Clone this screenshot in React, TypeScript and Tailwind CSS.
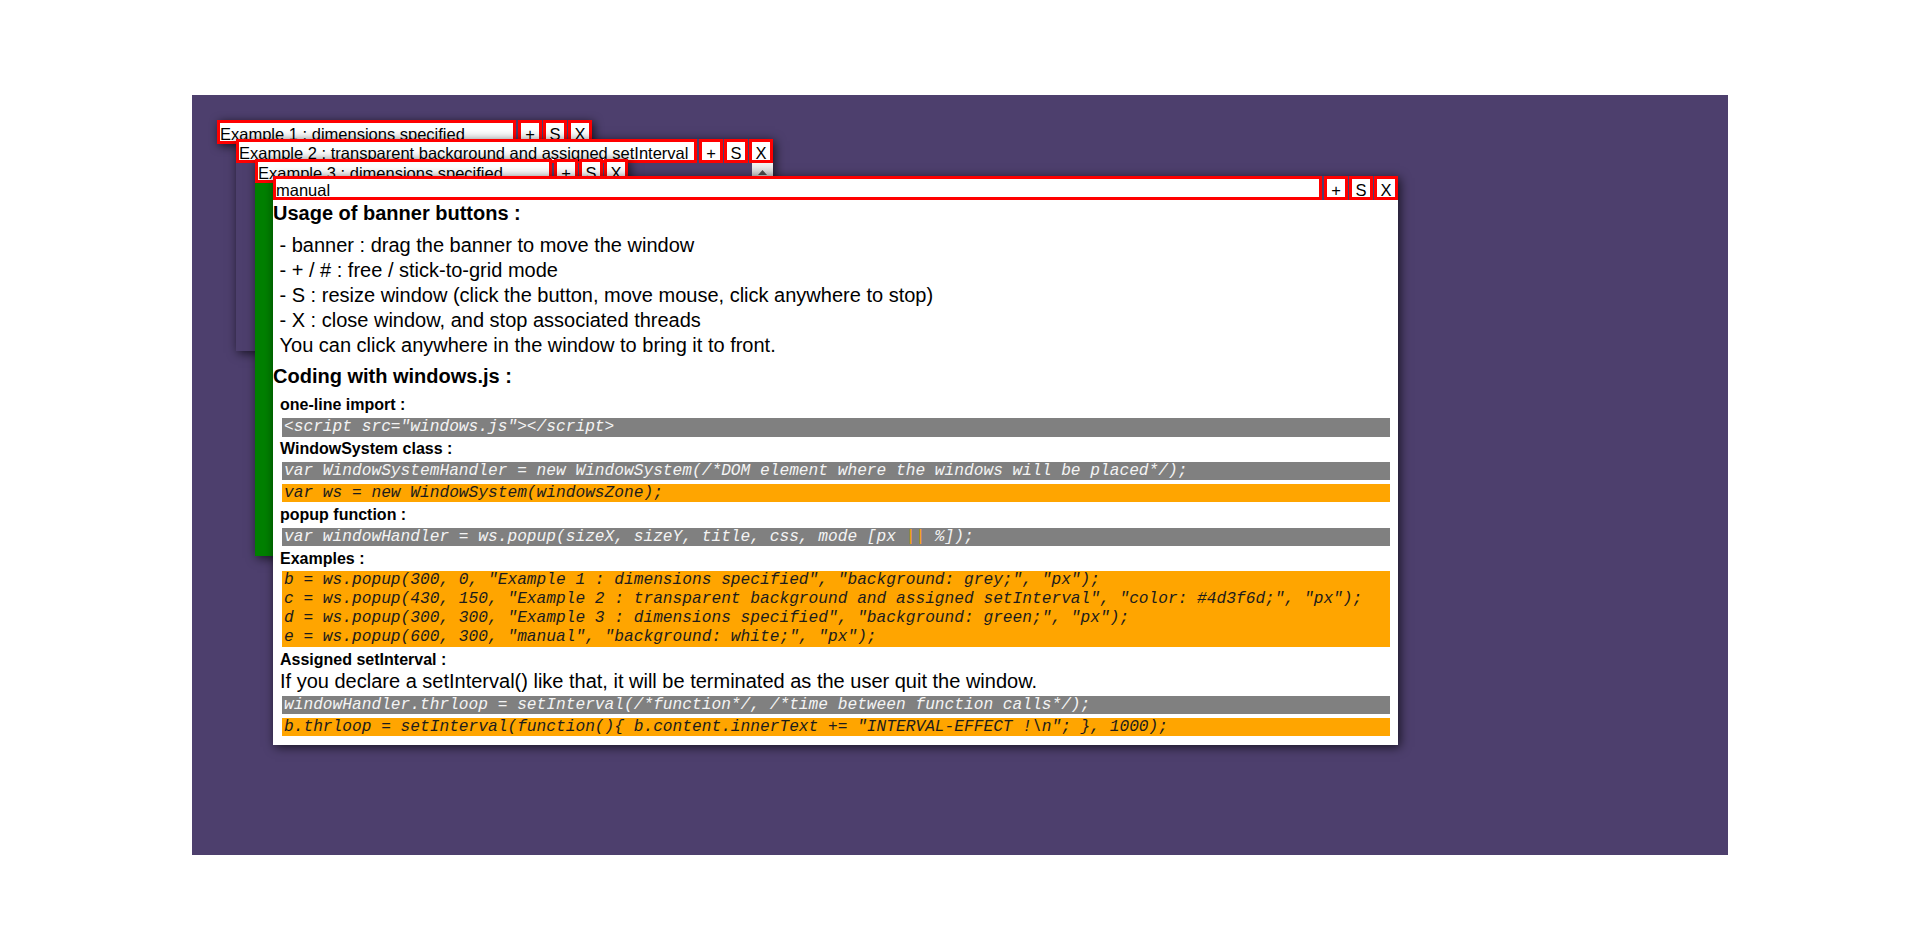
import type { ReactNode } from 'react'

const BTNS = ['+', 'S', 'X']

function Banner({ title }: { title: string }) {
  return (
    <div className="flex h-[24px] shrink-0 text-[16.5px] leading-[18px] text-black">
      <div className="min-w-0 flex-1 whitespace-nowrap border-[3px] border-[#ff0000] bg-white pt-[1.5px]">
        {title}
      </div>
      <div className="ml-[2px] flex gap-[1px]">
        {BTNS.map((b) => (
          <div key={b} className="w-[24px] border-[3px] border-[#ff0000] bg-white pt-[1.5px] text-center">
            {b}
          </div>
        ))}
      </div>
    </div>
  )
}

function Code({ tone, children, multi }: { tone: 'grey' | 'orange'; children: ReactNode; multi?: boolean }) {
  return (
    <div
      className={
        'ml-[2px] whitespace-pre pl-[2px] font-["Liberation_Mono","Courier_New",monospace] text-[16.2px] italic ' +
        (multi ? 'leading-[18.9px] ' : 'leading-[18.4px] ') +
        (tone === 'grey' ? 'bg-[#808080] text-[#f4f4f4]' : 'bg-[#ffa500] text-[#1c1c1c]')
      }
    >
      {children}
    </div>
  )
}

function Label({ children }: { children: ReactNode }) {
  return <div className="text-[16px] font-bold leading-[18.4px]">{children}</div>
}

export default function App() {
  return (
    <div className="h-[950px] w-full bg-white px-[192px] pt-[95px] font-['Liberation_Sans',Arial,sans-serif]">
      <div className="relative h-[760px] overflow-hidden bg-[#4d3f6d]">
        {/* Example 1 : banner only, content height 0 */}
        <div className="absolute left-[25px] top-[25px] w-[375px] shadow-[2px_2px_10px_rgba(0,0,0,0.7)]">
          <Banner title="Example 1 : dimensions specified" />
        </div>

        {/* Example 2 : transparent */}
        <div className="absolute left-[44px] top-[44px] flex h-[212px] w-[537px] flex-col shadow-[2px_2px_10px_rgba(0,0,0,0.7)]">
          <Banner title="Example 2 : transparent background and assigned setInterval" />
          <div className="relative flex-1 text-[#4d3f6d]">
            <div className="absolute right-0 top-0 flex h-[18px] w-[21px] items-center justify-center bg-gradient-to-b from-[#f4f4f4] to-[#c9c9c9]">
              <svg width="9" height="5" viewBox="0 0 9 5">
                <path d="M0 5 L4.5 0 L9 5 Z" fill="#505050" />
              </svg>
            </div>
          </div>
        </div>

        {/* Example 3 : green */}
        <div className="absolute left-[63px] top-[64px] flex h-[397px] w-[373px] flex-col shadow-[2px_2px_10px_rgba(0,0,0,0.7)]">
          <Banner title="Example 3 : dimensions specified" />
          <div className="flex-1 bg-[#008000]" />
        </div>

        {/* manual */}
        <div className="absolute left-[81px] top-[81px] flex h-[569px] w-[1125px] flex-col shadow-[2px_2px_10px_rgba(0,0,0,0.7)]">
          <Banner title="manual" />
          <div className="flex-1 overflow-hidden bg-white pt-[2px] text-black">
            <h3 className="text-[20px] font-bold leading-[23px]">Usage of banner buttons :</h3>
            <div className="mt-[7.5px] pl-[6.5px] text-[20px] leading-[25px]">
              <div>- banner : drag the banner to move the window</div>
              <div>- + / # : free / stick-to-grid mode</div>
              <div>- S : resize window (click the button, move mouse, click anywhere to stop)</div>
              <div>- X : close window, and stop associated threads</div>
              <div>You can click anywhere in the window to bring it to front.</div>
            </div>
            <h3 className="mt-[7px] text-[20px] font-bold leading-[23px]">Coding with windows.js :</h3>
            <div className="ml-[7px] mr-[8px] mt-[8.7px] flex flex-col gap-[3.5px]">
              <Label>one-line import :</Label>
              <Code tone="grey">{'<script src="windows.js"></script>'}</Code>
              <Label>WindowSystem class :</Label>
              <Code tone="grey">
                {'var WindowSystemHandler = new WindowSystem(/*DOM element where the windows will be placed*/);'}
              </Code>
              <Code tone="orange">{'var ws = new WindowSystem(windowsZone);'}</Code>
              <Label>popup function :</Label>
              <Code tone="grey">
                {'var windowHandler = ws.popup(sizeX, sizeY, title, css, mode [px '}
                <span className="text-[#ffa500]">||</span>
                {' %]);'}
              </Code>
              <Label>Examples :</Label>
              <Code tone="orange" multi>
                {'b = ws.popup(300, 0, "Example 1 : dimensions specified", "background: grey;", "px");\n'}
                {'c = ws.popup(430, 150, "Example 2 : transparent background and assigned setInterval", "color: #4d3f6d;", "px");\n'}
                {'d = ws.popup(300, 300, "Example 3 : dimensions specified", "background: green;", "px");\n'}
                {'e = ws.popup(600, 300, "manual", "background: white;", "px");'}
              </Code>
              <Label>Assigned setInterval :</Label>
              <div className="-mt-[1px] text-[20px] leading-[21px]">
                If you declare a setInterval() like that, it will be terminated as the user quit the window.
              </div>
              <Code tone="grey">{'windowHandler.thrloop = setInterval(/*function*/, /*time between function calls*/);'}</Code>
              <Code tone="orange">
                {'b.thrloop = setInterval(function(){ b.content.innerText += "INTERVAL-EFFECT !\\n"; }, 1000);'}
              </Code>
            </div>
          </div>
        </div>
      </div>
    </div>
  )
}
